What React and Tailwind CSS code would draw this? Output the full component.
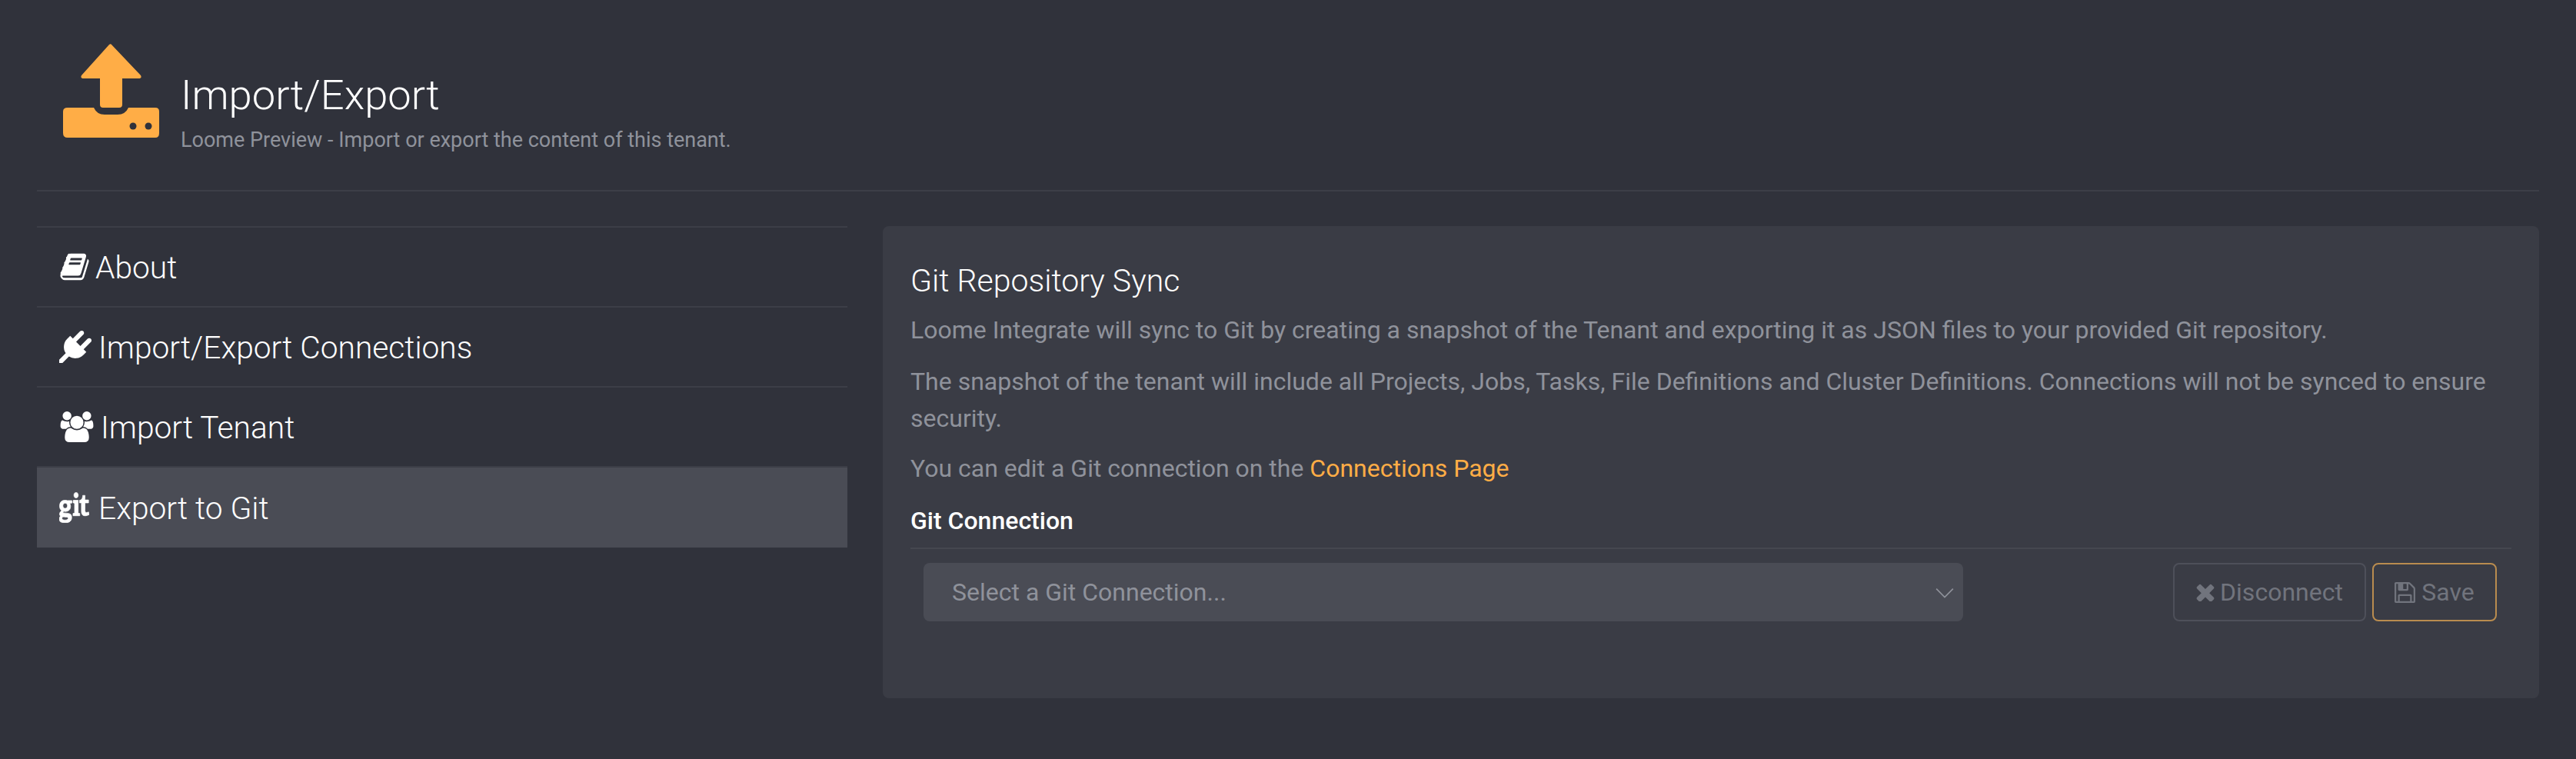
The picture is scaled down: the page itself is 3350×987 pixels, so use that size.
import React from "react";
import { FaGit } from "react-icons/fa";

const BookIcon = ({ className }) => (
  <svg viewBox="0 0 1792 1792" fill="currentColor" className={className}>
    <path d="M1703 478q40 57 18 129l-275 906q-19 64-76.5 107.5t-122.5 43.5h-923q-77 0-148.5-53.5t-99.5-131.5q-24-67-2-127 0-4 3-27t4-37q1-8-3-21.5t-3-19.5q2-11 8-21t16.5-23.5 16.5-23.5q23-38 45-91.5t30-91.5q3-10 .5-30t-.5-28q3-11 17-28t17-23q21-36 42-92t25-90q1-9-2.5-32t.5-28q4-13 22-30.5t22-22.5q19-26 42.5-84.5t27.5-96.5q1-8-3-25.5t-2-26.5q2-8 9-18t18-23 17-21q8-12 16.5-30.5t15-35 16-36 19.5-32 26.5-23.5 36-11.5 47.5 5.5l-1 3q38-9 51-9h761q74 0 114 56t18 130l-274 906q-36 119-71.5 153.5t-128.5 34.5h-869q-27 0-38 15-11 16-1 43 24 70 144 70h923q29 0 56-15.5t35-41.5l300-987q7-22 5-57 38 15 59 43zm-1064 2q-4 13 2 22.5t20 9.5h608q13 0 25.5-9.5t16.5-22.5l21-64q4-13-2-22.5t-20-9.5h-608q-13 0-25.5 9.5t-16.5 22.5zm-83 256q-4 13 2 22.5t20 9.5h608q13 0 25.5-9.5t16.5-22.5l21-64q4-13-2-22.5t-20-9.5h-608q-13 0-25.5 9.5t-16.5 22.5z" />
  </svg>
);

const PlugIcon = ({ className }) => (
  <svg viewBox="0 0 1792 1792" fill="currentColor" className={className}>
    <path d="M1755 453q37 38 37 90.5t-37 90.5l-401 400 150 150-160 160q-163 163-389.5 186.5t-411.5-100.5l-362 362h-181v-181l362-362q-124-185-100.5-411.5t186.5-389.5l160-160 150 150 400-401q38-37 91-37t90 37 37 90.5-37 90.5l-400 401 234 234 401-400q38-37 91-37t90 37z" />
  </svg>
);

const UsersIcon = ({ className }) => (
  <svg viewBox="0 0 2048 1792" fill="currentColor" className={className}>
    <path d="M657 896q-162 5-265 128h-134q-82 0-138-40.5t-56-118.5q0-353 124-353 6 0 43.5 21t97.5 42.5 119 21.5q67 0 133-23-5 37-5 66 0 139 81 256zm1071 637q0 120-73 189.5t-194 69.5h-874q-121 0-194-69.5t-73-189.5q0-53 3.5-103.5t14-109 26.5-108.5 43-97.5 62-81 85.5-53.5 111.5-20q10 0 43 21.5t73 48 107 48 135 21.5 135-21.5 107-48 73-48 43-21.5q61 0 111.5 20t85.5 53.5 62 81 43 97.5 26.5 108.5 14 109 3.5 103.5zm-1024-1277q0 106-75 181t-181 75-181-75-75-181 75-181 181-75 181 75 75 181zm704 384q0 159-112.5 271.5t-271.5 112.5-271.5-112.5-112.5-271.5 112.5-271.5 271.5-112.5 271.5 112.5 112.5 271.5zm576 225q0 78-56 118.5t-138 40.5h-134q-103-123-265-128 81-117 81-256 0-29-5-66 66 23 133 23 59 0 119-21.5t97.5-42.5 43.5-21q124 0 124 353zm-128-609q0 106-75 181t-181 75-181-75-75-181 75-181 181-75 181 75 75 181z" />
  </svg>
);

const TimesIcon = ({ className }) => (
  <svg viewBox="268 268 1256 1256" fill="currentColor" className={className}>
    <path d="M1490 1322q0 40-28 68l-136 136q-28 28-68 28t-68-28l-294-294-294 294q-28 28-68 28t-68-28l-136-136q-28-28-28-68t28-68l294-294-294-294q-28-28-28-68t28-68l136-136q28-28 68-28t68 28l294 294 294-294q28-28 68-28t68 28l136 136q28 28 28 68t-28 68l-294 294 294 294q28 28 28 68z" />
  </svg>
);

const FloppyIcon = ({ className }) => (
  <svg viewBox="128 128 1536 1536" fill="currentColor" className={className}>
    <path d="M512 1536h768v-384h-768v384zm896 0h128v-896q0-14-10-38.5t-20-34.5l-281-281q-10-10-34-20t-39-10v416q0 40-28 68t-68 28h-576q-40 0-68-28t-28-68v-416h-128v1280h128v-416q0-40 28-68t68-28h832q40 0 68 28t28 68v416zm-384-928v-320q0-13-9.5-22.5t-22.5-9.5h-192q-13 0-22.5 9.5t-9.5 22.5v320q0 13 9.5 22.5t22.5 9.5h192q13 0 22.5-9.5t9.5-22.5zm640 32v928q0 40-28 68t-68 28h-1344q-40 0-68-28t-28-68v-1344q0-40 28-68t68-28h928q40 0 88 20t76 48l280 280q28 28 48 76t20 88z" />
  </svg>
);

// tray with arrow, orange logo in the header
const ImportLogo = () => (
  <svg viewBox="0 0 126 122" className="w-[126px] h-[122px] shrink-0" fill="#ffad46">
    <path d="M63 1 L101 41 Q103 45 98 45 L77 45 L77 79 Q77 83 73 83 L52 83 Q48 83 48 79 L48 45 L27 45 Q22 45 24 41 L60 1 Q62 -0.5 63 1 Z" />
    <path
      fillRule="evenodd"
      d="M6 83 L40 83 Q44 92 54 92 L71 92 Q81 92 85 83 L120 83 Q125 83 125 88 L125 116 Q125 122 120 122 L6 122 Q0 122 0 116 L0 88 Q0 83 6 83 Z"
    />
    <circle cx="91" cy="107" r="4.5" fill="#30323b" />
    <circle cx="111" cy="107" r="4.5" fill="#30323b" />
  </svg>
);

const navItems = [
  { label: "About", icon: <BookIcon className="w-[40px] h-[40px]" />, gap: "ml-[7px]" },
  { label: "Import/Export Connections", icon: <PlugIcon className="w-[42px] h-[42px]" />, gap: "ml-[9px]" },
  { label: "Import Tenant", icon: <UsersIcon className="w-[46px] h-[40px]" />, gap: "ml-[8px]" },
  {
    label: "Export to Git",
    icon: (
      <FaGit
        className="w-[39px] h-[40px]"
        viewBox="0 44 512 420"
        preserveAspectRatio="none"
        strokeWidth="8"
      />
    ),
    gap: "ml-[12px]",
    active: true,
  },
];

export default function App() {
  return (
    <div className="min-h-screen bg-[#30323b] px-[48px] font-['Roboto',sans-serif]">
      <header className="h-[249px] border-b-2 border-[#3c3e47] flex items-start pt-[57px] pl-[34px]">
        <ImportLogo />
        <div className="ml-[27px] mt-[31px]">
          <h1 className="text-[54.3px] leading-[72px] font-light text-white">Import/Export</h1>
          <p className="text-[27px] leading-[42px] font-normal text-[#8f929b] mt-[1px]">
            Loome Preview - Import or export the content of this tenant.
          </p>
        </div>
      </header>

      <div className="grid grid-cols-[1054px_1fr] gap-[46px] mt-[45px]">
        <nav className="border-t-2 border-[#3c3e47]">
          {navItems.map((item) => (
            <div
              key={item.label}
              className={
                item.active
                  ? "h-[104px] flex items-center pl-[29px] bg-[#4a4c55] text-white"
                  : "h-[104px] flex items-center pl-[29px] border-b-2 border-[#3c3e47] text-white"
              }
            >
              {item.icon}
              <span className={`${item.gap} mt-[4px] text-[40.7px] font-light`}>{item.label}</span>
            </div>
          ))}
        </nav>

        <section className="bg-[#3a3c45] rounded-[8px] h-[614px] px-[36px] pt-[44px]">
          <h2 className="text-[41px] leading-[54px] font-light text-white">Git Repository Sync</h2>
          <div className="text-[32px] leading-[48px] font-normal text-[#8f929b] mt-[13px]">
            <p>Loome Integrate will sync to Git by creating a snapshot of the Tenant and exporting it as JSON files to your provided Git repository.</p>
            <p className="mt-[19px]">
              The snapshot of the tenant will include all Projects, Jobs, Tasks, File Definitions and Cluster Definitions. Connections will not be synced to ensure security.
            </p>
            <p className="mt-[17px]">
              You can edit a Git connection on the <a className="text-[#ffad46]">Connections Page</a>
            </p>
          </div>
          <div className="mt-[24px] pb-[15px] border-b-2 border-[#45474f] text-[32px] leading-[40px] font-medium text-white">
            Git Connection
          </div>
          <div className="flex items-start mt-[18px] pl-[17px] pr-[19px]">
            <div className="w-[1352px] h-[76px] bg-[#4a4c55] rounded-[8px] flex items-center justify-between pl-[37px] pr-[11px] text-[32px] font-normal text-[#8f929b]">
              <span>Select a Git Connection...</span>
              <svg viewBox="0 0 24 24" className="w-[26px] h-[26px]" fill="none" stroke="currentColor" strokeWidth="1.5">
                <path d="M2 8 L12 18 L22 8" />
              </svg>
            </div>
            <div className="ml-auto flex gap-[8px]">
              <button className="w-[251px] h-[76px] border-2 border-[#4e505a] rounded-[8px] flex items-center justify-center text-[32px] text-[#71747d]">
                <TimesIcon className="w-[24px] h-[24px] mr-[7px]" />
                Disconnect
              </button>
              <button className="w-[162px] h-[76px] border-2 border-[#b98c4f] rounded-[8px] flex items-center justify-center text-[32px] text-[#71747d]">
                <FloppyIcon className="w-[27px] h-[27px] mr-[8px]" />
                Save
              </button>
            </div>
          </div>
        </section>
      </div>
    </div>
  );
}
